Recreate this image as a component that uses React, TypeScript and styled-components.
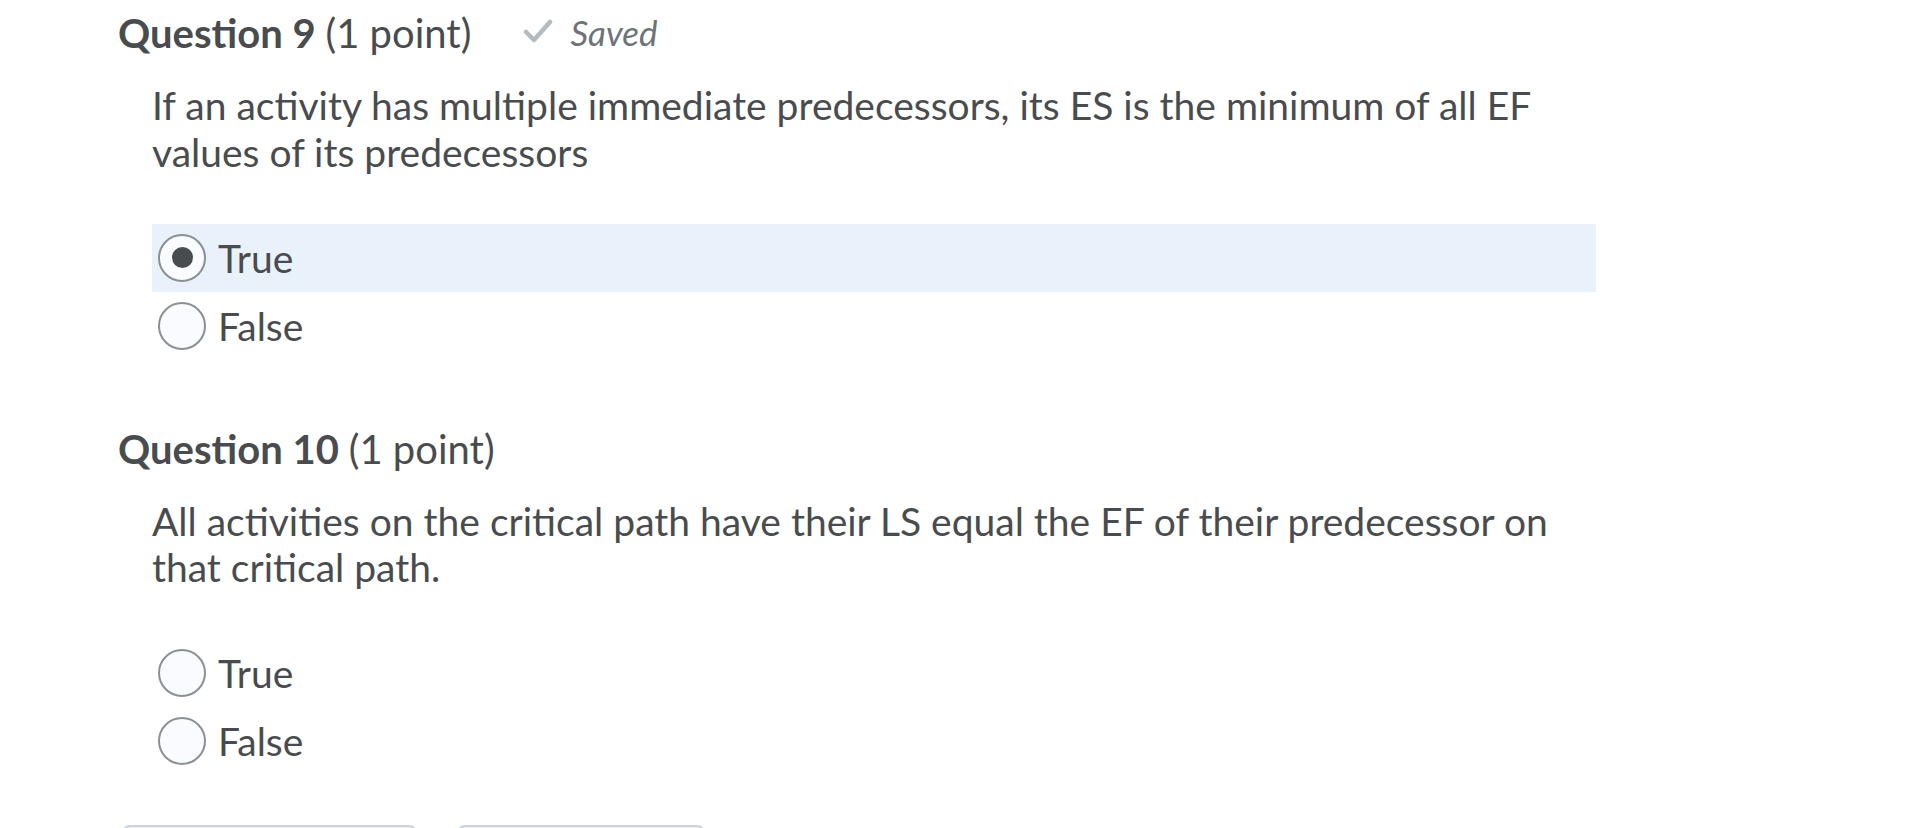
import React from "react";
import styled, { createGlobalStyle } from "styled-components";

const Global = createGlobalStyle`
  html, body {
    margin: 0;
    padding: 0;
    background: #ffffff;
    overflow: hidden;
  }
  body {
    font-family: Lato, "Open Sans", "Liberation Sans", sans-serif;
    color: #494c4e;
  }
`;

const Page = styled.main`
  display: flex;
  flex-direction: column;
  padding: 7px 0 0 118px;
`;

const Question = styled.section<{ $last?: boolean }>`
  display: flex;
  flex-direction: column;
  margin-bottom: ${(p) => (p.$last ? "50px" : "63px")};
`;

const Header = styled.div`
  display: flex;
  align-items: baseline;
  height: 48px;
  padding-top: 2px;
`;

const Title = styled.h2`
  margin: 0;
  font-size: 40px;
  line-height: 48px;
  font-weight: 700;
  color: #494c4e;
`;

const Points = styled.span`
  font-weight: 400;
`;

const Saved = styled.span`
  display: inline-flex;
  align-items: center;
  gap: 17px;
  margin-left: 52px;
  font-size: 35px;
  font-style: italic;
  color: #6e7376;
  position: relative;
  top: -4px;
`;

const Check = styled.svg`
  width: 30px;
  height: 24px;
  position: relative;
  top: -1px;
`;

const Text = styled.p`
  margin: 25px 0 0 34px;
  max-width: 1444px;
  font-size: 39px;
  line-height: 46.8px;
  color: #494c4e;
`;

const Options = styled.div`
  display: flex;
  flex-direction: column;
  margin: 48px 0 0 34px;
  width: 1444px;
`;

const Option = styled.label<{ $selected?: boolean }>`
  display: flex;
  align-items: center;
  height: 68px;
  padding-left: 6px;
  background: ${(p) => (p.$selected ? "#e9f1fb" : "transparent")};
  font-size: 39px;
  color: #494c4e;
  cursor: pointer;
`;

const Radio = styled.span<{ $selected?: boolean }>`
  display: flex;
  align-items: center;
  justify-content: center;
  box-sizing: border-box;
  width: 48px;
  height: 48px;
  border-radius: 50%;
  border: 2px solid #8a9094;
  background: #f9fbff;
  margin-right: 12px;
  flex-shrink: 0;
  &::after {
    content: "";
    display: ${(p) => (p.$selected ? "block" : "none")};
    width: 21px;
    height: 21px;
    border-radius: 50%;
    background: #494c4e;
  }
`;

const Buttons = styled.div`
  display: flex;
  gap: 40px;
  margin-left: 4px;
`;

const Button = styled.button<{ $w: number }>`
  width: ${(p) => p.$w}px;
  height: 60px;
  border: 2px solid #cdd3dc;
  border-radius: 8px;
  background: #f1f3f5;
  font-family: inherit;
  font-size: 32px;
  color: #494c4e;
`;

type Q = {
  num: number;
  text: string;
  saved?: boolean;
  selected?: string;
};

const questions: Q[] = [
  {
    num: 9,
    text: "If an activity has multiple immediate predecessors, its ES is the minimum of all EF values of its predecessors",
    saved: true,
    selected: "True",
  },
  {
    num: 10,
    text: "All activities on the critical path have their LS equal the EF of their predecessor on that critical path.",
  },
];

export default function App() {
  return (
    <>
      <Global />
      <Page>
        {questions.map((q, i) => (
          <Question key={q.num} $last={i === questions.length - 1}>
            <Header>
              <Title>
                Question {q.num} <Points>(1 point)</Points>
              </Title>
              {q.saved && (
                <Saved>
                  <Check viewBox="0 0 30 24">
                    <path
                      d="M3 13 L11 21 L27 3"
                      fill="none"
                      stroke="#b4bbc0"
                      strokeWidth="4.5"
                      strokeLinecap="round"
                      strokeLinejoin="round"
                    />
                  </Check>
                  Saved
                </Saved>
              )}
            </Header>
            <Text>{q.text}</Text>
            <Options>
              {["True", "False"].map((o) => (
                <Option key={o} $selected={q.selected === o}>
                  <Radio $selected={q.selected === o} />
                  {o}
                </Option>
              ))}
            </Options>
          </Question>
        ))}
        <Buttons>
          <Button $w={295}>Save All Responses</Button>
          <Button $w={248}>Submit Quiz</Button>
        </Buttons>
      </Page>
    </>
  );
}
